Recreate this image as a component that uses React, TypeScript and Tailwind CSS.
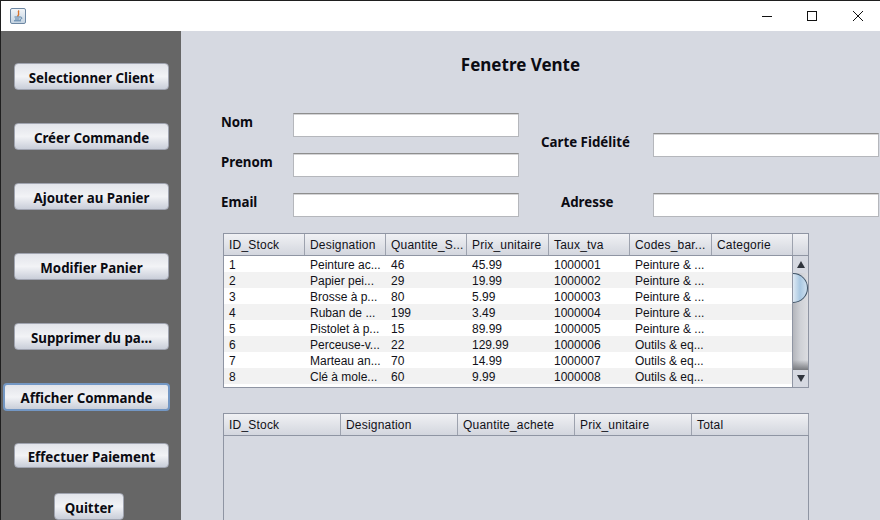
const sideButtons = [
  { label: "Selectionner Client", className: "mt-8" },
  { label: "Créer Commande", className: "mt-[33px]" },
  { label: "Ajouter au Panier", className: "mt-[33px]" },
  { label: "Modifier Panier", className: "mt-[43px]" },
  { label: "Supprimer du pa...", className: "mt-[43px]" },
];

const stockHeaders = ["ID_Stock", "Designation", "Quantite_S...", "Prix_unitaire", "Taux_tva", "Codes_bar...", "Categorie"];
const stockWidths = ["w-[81px]", "w-[81px]", "w-[81px]", "w-[82px]", "w-[81px]", "w-[82px]", "w-[81px]"];
const achatHeaders = ["ID_Stock", "Designation", "Quantite_achete", "Prix_unitaire", "Total"];

const stockRows = [
  ["1", "Peinture ac...", "46", "45.99", "1000001", "Peinture & ..."],
  ["2", "Papier pei...", "29", "19.99", "1000002", "Peinture & ..."],
  ["3", "Brosse à p...", "80", "5.99", "1000003", "Peinture & ..."],
  ["4", "Ruban de ...", "199", "3.49", "1000004", "Peinture & ..."],
  ["5", "Pistolet à p...", "15", "89.99", "1000005", "Peinture & ..."],
  ["6", "Perceuse-v...", "22", "129.99", "1000006", "Outils & eq..."],
  ["7", "Marteau an...", "70", "14.99", "1000007", "Outils & eq..."],
  ["8", "Clé à mole...", "60", "9.99", "1000008", "Outils & eq..."],
];

const buttonFace =
  "flex items-center justify-center rounded-[4px] bg-gradient-to-b from-[#e2e4ea] via-[#f2f3f6] to-[#c9ced9] pt-1 font-['Noto_Sans',sans-serif] text-[13.3px] font-bold text-[#0b0b12]";

function SideButton({ label, className }: { label: string; className: string }) {
  return <button className={`${buttonFace} ${className} ml-[13px] h-[27px] w-[155px] border border-[#a0a4b0] whitespace-nowrap`}>{label}</button>;
}

function Field() {
  return <input className="h-6 w-[226px] border border-[#b5b7bc] border-t-[#8e8e8e] bg-white shadow-[inset_0_1px_0_#d4d4d6]" />;
}

function Label({ text, className }: { text: string; className: string }) {
  return <span className={`font-['Noto_Sans',sans-serif] text-[13.3px] leading-4 font-bold text-[#0b0b12] ${className}`}>{text}</span>;
}

function HeaderCell({ text, width }: { text: string; width: string }) {
  return (
    <div className={`${width} shrink-0 overflow-hidden border-r border-[#9da2ae] pl-[5px] leading-[23px] tracking-[0.2px] whitespace-nowrap`}>
      {text}
    </div>
  );
}

function ScrollBar() {
  return (
    <div className="flex w-4 shrink-0 flex-col border-l border-[#8f95a3] bg-gradient-to-r from-[#b4b6bc] via-[#cfd1d6] to-[#dcdde1]">
      <div className="flex h-[17px] shrink-0 items-center justify-center bg-[#d6d9e1]">
        <svg width="8" height="7" viewBox="0 0 8 7">
          <path d="M4 0 L8 7 L0 7 Z" fill="#2f343c" />
        </svg>
      </div>
      <div className="h-[30px] w-[15px] shrink-0 rounded-r-full border-y border-r border-[#3f5468] bg-gradient-to-r from-[#dfe9f3] via-[#a9c8e2] to-[#cfe0ef]" />
      <div className="flex-1" />
      <div className="h-[10px] shrink-0 bg-gradient-to-b from-transparent to-[#77797e]" />
      <div className="flex h-[17px] shrink-0 items-center justify-center rounded-tr-[6px] bg-[#d6d9e1]">
        <svg width="8" height="7" viewBox="0 0 8 7">
          <path d="M0 0 L8 0 L4 7 Z" fill="#2f343c" />
        </svg>
      </div>
    </div>
  );
}

export default function App() {
  return (
    <div className="flex h-[520px] w-[880px] flex-col overflow-hidden border-t border-l border-[#1f1f1f] bg-white">
      {/* Title bar */}
      <div className="flex h-[30px] shrink-0 items-center bg-white">
        <div className="ml-[9px] flex h-4 w-4 items-center justify-center rounded-[2px] border border-[#6d87a3] bg-gradient-to-b from-[#f2f5f8] to-[#c5d4e2]">
          <svg width="12" height="12" viewBox="0 0 12 12" fill="none">
            <path d="M7 0.5 C5 2.5 8.5 3.5 5.5 6.5" stroke="#d9722a" strokeWidth="1.4" />
            <path d="M2.5 7 H8 M3 9 H7.5 M2 10.8 H9 M8 7 C10.5 7 10.5 9 8 9.4" stroke="#46739c" strokeWidth="0.9" />
          </svg>
        </div>
        <div className="ml-auto flex items-center">
          <svg width="12" height="12" viewBox="0 0 12 12" className="mr-[33px]">
            <path d="M1 6.5 H11" stroke="#111" />
          </svg>
          <svg width="12" height="12" viewBox="0 0 12 12" className="mr-[34px]">
            <rect x="1.5" y="1.5" width="9" height="9" fill="none" stroke="#111" />
          </svg>
          <svg width="12" height="12" viewBox="0 0 12 12" className="mr-[16px]">
            <path d="M1 1 L11 11 M11 1 L1 11" stroke="#111" />
          </svg>
        </div>
      </div>

      <div className="flex min-h-0 flex-1">
        {/* Sidebar */}
        <div className="flex w-[180px] shrink-0 flex-col bg-[#666666]">
          {sideButtons.map((b) => (
            <SideButton key={b.label} label={b.label} className={b.className} />
          ))}
          <button className={`${buttonFace} mt-[33px] ml-[2px] h-[28px] w-[167px] border-2 border-[#7397c4]`}>
            Afficher Commande
          </button>
          <button className={`${buttonFace} mt-8 ml-[13px] h-[25px] w-[155px] border border-[#a0a4b0]`}>Effectuer Paiement</button>
          <button className={`${buttonFace} mt-[25px] ml-[53px] h-[27px] w-[70px] shrink-0 border border-[#a0a4b0]`}>Quitter</button>
        </div>

        {/* Main */}
        <div className="flex min-w-0 flex-1 flex-col bg-[#d6d9e1] pl-[42px] font-['Liberation_Sans',sans-serif] text-xs text-[#111118]">
          <h1 className="mt-[23px] -ml-[42px] pr-5 text-center font-['Noto_Sans',sans-serif] text-[17px] leading-[22px] font-bold text-[#0b0b12]">
            Fenetre Vente
          </h1>

          <div className="mt-[37px] flex h-[104px] shrink-0">
            <div className="ml-[-2px] flex w-[320px] flex-col">
              <div className="flex items-start">
                <Label text="Nom" className="mt-[1px] w-[72px]" />
                <Field />
              </div>
              <div className="mt-4 flex items-start">
                <Label text="Prenom" className="mt-[1px] w-[72px]" />
                <Field />
              </div>
              <div className="mt-4 flex items-start">
                <Label text="Email" className="mt-[1px] w-[72px]" />
                <Field />
              </div>
            </div>
            <div className="flex flex-col">
              <div className="mt-5 flex items-start">
                <Label text="Carte Fidélité" className="mt-[1px] w-[112px]" />
                <Field />
              </div>
              <div className="mt-9 flex items-start">
                <Label text="Adresse" className="mt-[1px] ml-5 w-[92px]" />
                <Field />
              </div>
            </div>
          </div>

          {/* Stock table */}
          <div className="mt-4 flex h-[155px] w-[586px] shrink-0 flex-col border border-[#8f95a3] bg-white">
            <div className="flex h-[22px] shrink-0 border-b border-[#8f95a3] bg-gradient-to-b from-[#f0f1f4] to-[#d3d6de]">
              {stockHeaders.map((h, i) => (
                <HeaderCell key={h} text={h} width={stockWidths[i]} />
              ))}
            </div>
            <div className="flex min-h-0 flex-1">
              <div className="flex-1">
                {stockRows.map((row, i) => (
                  <div key={row[0]} className={`flex h-4 leading-[19px] ${i % 2 === 1 ? "bg-[#f2f2f2]" : "bg-white"}`}>
                    {row.map((cell, j) => (
                      <div key={j} className={`${stockWidths[j]} shrink-0 overflow-hidden pl-[5px] whitespace-nowrap`}>
                        {cell}
                      </div>
                    ))}
                  </div>
                ))}
              </div>
              <ScrollBar />
            </div>
          </div>

          {/* Achat table */}
          <div className="mt-[25px] flex h-[120px] w-[586px] shrink-0 flex-col border border-[#8f95a3]">
            <div className="flex h-[22px] shrink-0 border-b border-[#8f95a3] bg-gradient-to-b from-[#f0f1f4] to-[#d3d6de]">
              {achatHeaders.map((h) => (
                <HeaderCell key={h} text={h} width="w-[117px]" />
              ))}
            </div>
          </div>
        </div>
      </div>
    </div>
  );
}
